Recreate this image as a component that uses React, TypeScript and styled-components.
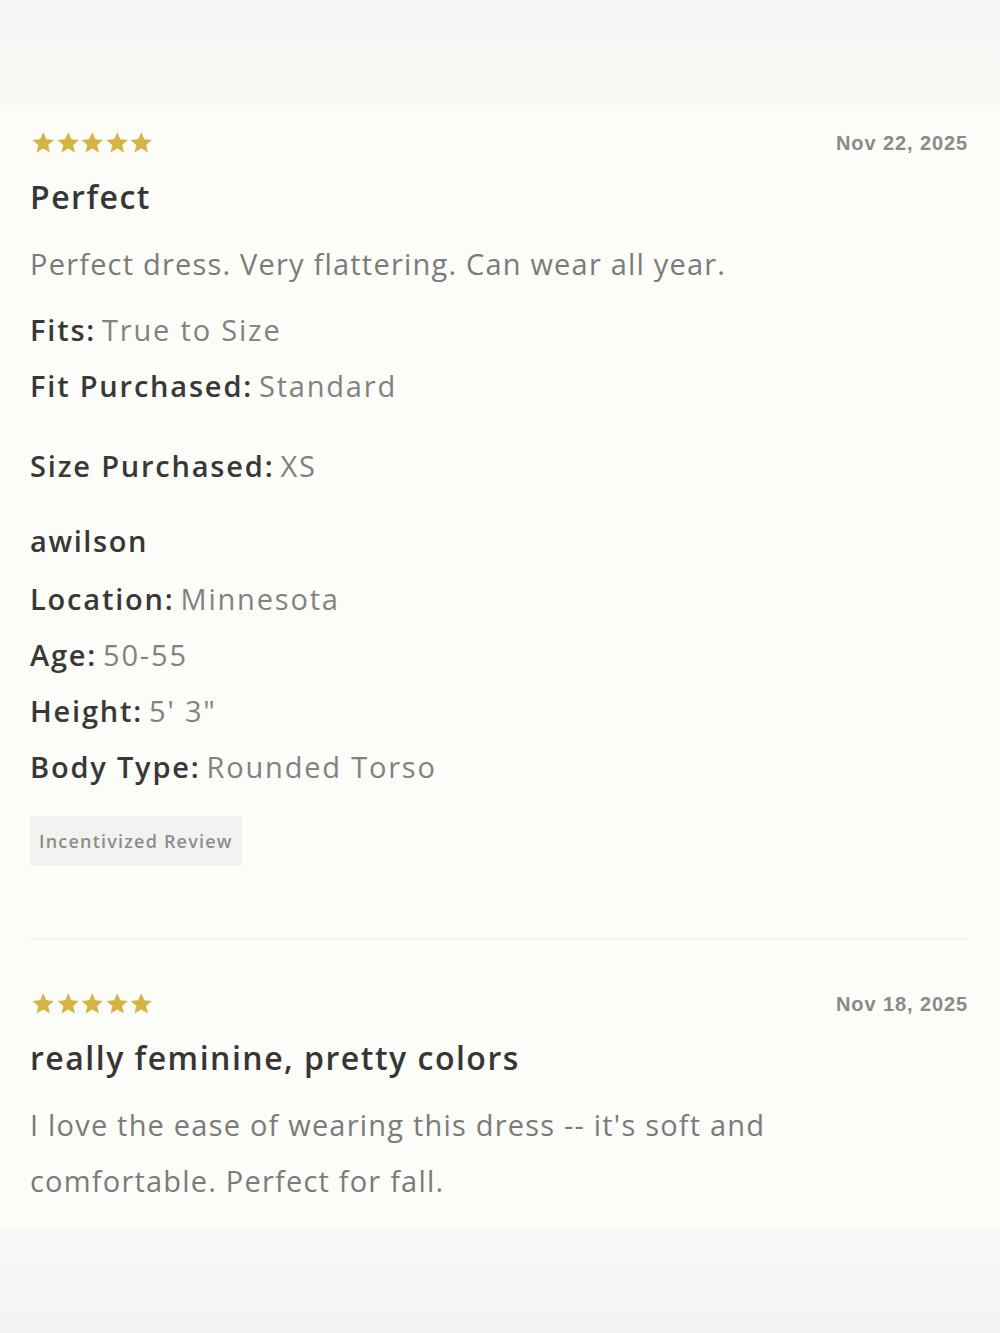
import styled, { createGlobalStyle } from 'styled-components'

const GlobalStyle = createGlobalStyle`
  html, body {
    margin: 0;
    padding: 0;
    background: #f7f7f5;
  }
  body {
    font-family: "Open Sans", "Noto Sans", sans-serif;
    -webkit-font-smoothing: antialiased;
  }
`

const Page = styled.div`
  width: 1000px;
  height: 1333px;
  display: flex;
  flex-direction: column;
  background: #f7f7f5;
`

const TopBand = styled.div`
  height: 106px;
  background: linear-gradient(180deg, #f5f5f3 0%, #f9f9f6 100%);
`

const List = styled.div`
  background: #fcfcf9;
  padding: 0 32px 0 30px;
  flex: 0 0 auto;
`

const BottomBand = styled.div`
  flex: 1;
  background: linear-gradient(180deg, #f8f8f6 0%, #f4f4f2 100%);
`

const Review = styled.article<{ $first?: boolean }>`
  padding: ${(p) => (p.$first ? '23px 0 72px' : '50px 0 18px')};
  border-bottom: ${(p) => (p.$first ? '2px solid #f1f1ee' : 'none')};
`

const HeaderRow = styled.div`
  display: flex;
  justify-content: space-between;
  align-items: center;
  height: 28px;
`

const Stars = styled.div`
  display: flex;
  margin-left: 1px;
`

const DateText = styled.span`
  font-family: "Liberation Sans", Arial, sans-serif;
  font-weight: 700;
  font-size: 20px;
  color: #8a8a88;
  letter-spacing: 0.9px;
`

const Title = styled.h2`
  margin: 18px 0 0;
  font-size: 32px;
  font-weight: 600;
  color: #363636;
  line-height: 44px;
  letter-spacing: 1.5px;
`

const Body = styled.p`
  margin: 17px 0 0;
  font-size: 29px;
  line-height: 56px;
  color: #7b7b79;
  letter-spacing: 1.2px;
  max-width: 800px;
`

const Field = styled.div<{ $gap?: number }>`
  margin-top: ${(p) => p.$gap ?? 0}px;
  font-size: 29px;
  line-height: 56px;
  color: #828280;
  letter-spacing: 1.8px;
`

const Label = styled.span`
  color: #383838;
  font-weight: 600;
  margin-right: 6px;
`

const Username = styled.div`
  margin: 19px 0 2px;
  font-size: 29px;
  font-weight: 600;
  line-height: 56px;
  color: #383838;
  letter-spacing: 1.6px;
`

const Badge = styled.span`
  display: inline-block;
  margin-top: 21px;
  padding: 13px 9px;
  background: #f2f2f0;
  color: #8d8d8b;
  font-size: 18px;
  font-weight: 600;
  line-height: 24px;
  letter-spacing: 1.2px;
`

const Star = () => (
  <svg width="24.5" height="24" viewBox="0 0 24 24">
    <path
      d="M12 1.2l3.1 7 7.6.7-5.8 5 1.8 7.5L12 17.6l-6.7 3.8 1.8-7.5-5.8-5 7.6-.7z"
      fill="#d6b443"
    />
  </svg>
)

const Rating = () => (
  <Stars>
    {[0, 1, 2, 3, 4].map((i) => (
      <Star key={i} />
    ))}
  </Stars>
)

const App = () => (
  <Page>
    <GlobalStyle />
    <TopBand />
    <List>
      <Review $first>
        <HeaderRow>
          <Rating />
          <DateText>Nov 22, 2025</DateText>
        </HeaderRow>
        <Title>Perfect</Title>
        <Body>Perfect dress. Very flattering. Can wear all year.</Body>
        <Field $gap={10}>
          <Label>Fits:</Label>True to Size
        </Field>
        <Field>
          <Label>Fit Purchased:</Label>Standard
        </Field>
        <Field $gap={24}>
          <Label>Size Purchased:</Label>XS
        </Field>
        <Username>awilson</Username>
        <Field>
          <Label>Location:</Label>Minnesota
        </Field>
        <Field>
          <Label>Age:</Label>50-55
        </Field>
        <Field>
          <Label>Height:</Label>5' 3"
        </Field>
        <Field>
          <Label>Body Type:</Label>Rounded Torso
        </Field>
        <Badge>Incentivized Review</Badge>
      </Review>
      <Review>
        <HeaderRow>
          <Rating />
          <DateText>Nov 18, 2025</DateText>
        </HeaderRow>
        <Title>really feminine, pretty colors</Title>
        <Body>I love the ease of wearing this dress -- it's soft and comfortable. Perfect for fall.</Body>
      </Review>
    </List>
    <BottomBand />
  </Page>
)

export default App
